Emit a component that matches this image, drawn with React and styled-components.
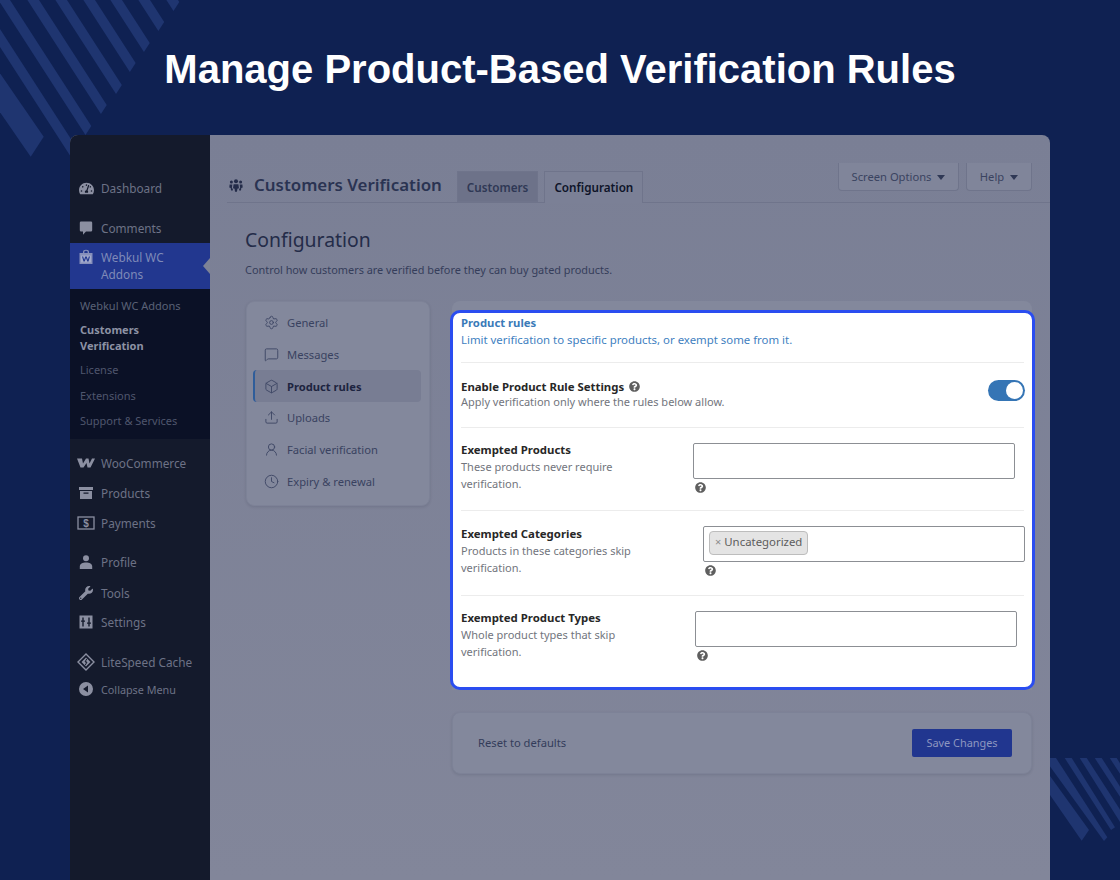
import React from "react";
import styled, { createGlobalStyle } from "styled-components";
import { Settings, MessageSquare, Box, Upload, UserRound, Clock } from "lucide-react";
import { FaTachometerAlt, FaWrench, FaQuestionCircle } from "react-icons/fa";

const uiFont = `"Noto Sans", "Open Sans", sans-serif`;

const GlobalStyle = createGlobalStyle`
  html, body { margin: 0; padding: 0; background: #0f2152; }
  * { box-sizing: border-box; }
`;

const Page = styled.div`
  position: relative;
  width: 1120px;
  height: 880px;
  overflow: hidden;
  background: #0f2152;
  font-family: ${uiFont};
`;

const Decor = styled.svg`
  position: absolute;
  left: 0;
  top: 0;
`;

const PageTitle = styled.h1`
  position: relative;
  margin: 0;
  height: 135px;
  padding-top: 44px;
  text-align: center;
  font: bold 40px/50px "Liberation Sans", Arial, sans-serif;
  color: #fff;
`;

const Window = styled.div`
  position: relative;
  width: 980px;
  height: 745px;
  margin-left: 70px;
  display: grid;
  grid-template-columns: 140px 1fr;
  border-radius: 8px 8px 0 0;
  overflow: hidden;
  background: linear-gradient(180deg, #7a7f95 0%, #82869a 100%);
`;

/* ---- sidebar ---- */
const Sidebar = styled.nav`
  background: #141a2c;
  padding-top: 41px;
  font-size: 11.8px;
  color: #6d7286;
`;

const MenuItem = styled.div`
  display: flex;
  align-items: center;
  height: ${(p) => p.$h || 24}px;
  margin-top: ${(p) => p.$mt || 0}px;
  padding-left: 4px;
  line-height: 17px;
  font-size: ${(p) => p.$size || 11.8}px;
`;

const MenuIcon = styled.span`
  width: 24px;
  margin-right: 3px;
  display: flex;
  justify-content: center;
  flex: none;
  color: #8b8fa1;
`;

const ActiveItem = styled.div`
  position: relative;
  display: flex;
  align-items: flex-start;
  height: 46px;
  margin-top: 3px;
  padding: 6px 0 0 4px;
  line-height: 17px;
  background: #22378f;
  color: #7f8ab8;
  ${MenuIcon} {
    color: #8790bb;
  }
  &::after {
    content: "";
    position: absolute;
    right: 0;
    top: 15px;
    border: 8px solid transparent;
    border-right: 7px solid #7d8296;
    border-left-width: 0;
  }
`;

const SubMenu = styled.div`
  height: 150px;
  padding: 7.5px 0 0 10px;
  background: #0b1126;
  font-size: 11px;
  color: #4f566d;
`;

const SubItem = styled.div`
  margin-bottom: ${(p) => p.$mb || 0}px;
  line-height: ${(p) => (p.$bold ? 16 : 17)}px;
  font-weight: ${(p) => (p.$bold ? 700 : 400)};
  color: ${(p) => (p.$bold ? "#8d92a4" : p.$light ? "#5a6176" : "#4f566d")};
`;

/* ---- main column ---- */
const Main = styled.main`
  min-width: 0;
  padding: 28px 18px 0 17px;
  color: #2b3350;
`;

const Topbar = styled.div`
  display: flex;
  align-items: flex-end;
  height: 40px;
  margin-right: -18px;
  border-bottom: 1px solid #6f748b;
`;

const AppIcon = styled.span`
  display: flex;
  margin: 0 11px 10px 2px;
  color: #242c4a;
`;

const AppTitle = styled.div`
  margin: 0 15px 5px 0;
  font-size: 16.9px;
  line-height: 24px;
  font-weight: 600;
  color: #2a3352;
`;

const Tab = styled.div`
  height: ${(p) => (p.$active ? 32 : 31)}px;
  margin-right: 6px;
  margin-bottom: ${(p) => (p.$active ? -1 : 0)}px;
  padding: 0 9px;
  border: 1px solid #6f748b;
  border-bottom: ${(p) => (p.$active ? "none" : "1px solid #6f748b")};
  background: ${(p) => (p.$active ? "#7b8096" : "#6d7289")};
  font-size: 11.7px;
  line-height: 30px;
  font-weight: 600;
  color: ${(p) => (p.$active ? "#0e1429" : "#2f3855")};
`;

const ScreenButtons = styled.div`
  display: flex;
  gap: 7px;
  margin: 0 18px 12px auto;
  align-self: flex-start;
`;

const ScreenButton = styled.div`
  display: flex;
  align-items: center;
  gap: 6px;
  width: ${(p) => p.$w}px;
  height: 28px;
  justify-content: center;
  border: 1px solid #6f748b;
  border-top: none;
  border-radius: 0 0 4px 4px;
  background: #80859a;
  font-size: 11.2px;
  color: #3a4360;
  &::after {
    content: "";
    border-top: 5px solid #2f3855;
    border-left: 4px solid transparent;
    border-right: 4px solid transparent;
    margin-top: 2px;
  }
`;

const Content = styled.div`
  padding: 24px 0 0 18px;
`;

const Heading = styled.h2`
  margin: 0;
  font-size: 19.4px;
  line-height: 26px;
  font-weight: 400;
  color: #242c49;
`;

const Lead = styled.p`
  margin: 8px 0 0;
  font-size: 10.9px;
  line-height: 17px;
  color: #353d5a;
`;

const Columns = styled.div`
  display: flex;
  align-items: flex-start;
  gap: 22px;
  margin-top: 23px;
`;

const SideNav = styled.div`
  flex: none;
  width: 184px;
  height: 205px;
  margin-left: 1px;
  padding: 5px 8px 0 6px;
  border: 1px solid #7d8297;
  border-radius: 8px;
  background: #83889c;
  box-shadow: 0 1px 3px rgba(20, 26, 44, 0.12);
`;

const SideItem = styled.div`
  display: flex;
  align-items: center;
  gap: 8px;
  height: ${(p) => (p.$active ? 32 : 31.6)}px;
  padding-left: ${(p) => (p.$active ? 9 : 11)}px;
  border-left: ${(p) => (p.$active ? "2px solid #2f5d9a" : "none")};
  border-radius: 4px;
  background: ${(p) => (p.$active ? "#787d93" : "transparent")};
  font-size: 11.2px;
  font-weight: ${(p) => (p.$active ? 700 : 400)};
  color: ${(p) => (p.$active ? "#1d2440" : "#394260")};
  svg {
    flex: none;
    color: #3f4865;
  }
`;

const RightColumn = styled.div`
  flex: 1;
  min-width: 0;
`;

const Panel = styled.div`
  height: 389px;
  padding-top: 9px;
  border-radius: 8px 8px 0 0;
  background: #83889c;
`;

const Highlight = styled.section`
  position: relative;
  height: 380px;
  margin: 0 -3px 0 -2px;
  padding: 0 8px;
  border: 3px solid #2a4df0;
  border-radius: 10px;
  background: #fff;
`;

const Intro = styled.div`
  height: 50px;
  padding-top: 1px;
  border-bottom: 1px solid #ececec;
`;

const IntroTitle = styled.div`
  font-size: 11.3px;
  line-height: 17px;
  font-weight: 700;
  color: #3a7ab8;
`;

const IntroText = styled.div`
  font-size: 11.4px;
  line-height: 17px;
  color: #3f7fbf;
`;

const Row = styled.div`
  display: flex;
  align-items: flex-start;
  height: ${(p) => p.$h}px;
  padding-top: 15px;
  border-bottom: ${(p) => (p.$last ? "none" : "1px solid #ececec")};
`;

const LabelCol = styled.div`
  flex: none;
  width: ${(p) => p.$w || 232}px;
  margin-top: ${(p) => p.$shift || 0}px;
`;

const FieldTitle = styled.div`
  display: flex;
  align-items: center;
  gap: 5px;
  font-size: 11.4px;
  line-height: 17px;
  font-weight: 700;
  color: #272727;
`;

const FieldText = styled.div`
  font-size: 11px;
  line-height: 17px;
  color: #72757d;
  max-width: 180px;
`;

const WideText = styled(FieldText)`
  margin-top: -2px;
  max-width: none;
`;

const Toggle = styled.div`
  position: relative;
  flex: none;
  width: 37px;
  height: 21px;
  margin: 2px -1px 0 auto;
  border-radius: 11px;
  background: #3575b5;
  &::after {
    content: "";
    position: absolute;
    right: 2px;
    top: 2px;
    width: 17px;
    height: 17px;
    border-radius: 50%;
    background: #fff;
  }
`;

const FieldCol = styled.div`
  flex: none;
  width: 322px;
`;

const TextBox = styled.div`
  display: flex;
  align-items: flex-start;
  height: 36px;
  padding: 4px 5px;
  border: 1px solid #8c8f94;
  border-radius: 2px;
  background: #fff;
`;

const Chip = styled.div`
  display: flex;
  align-items: center;
  gap: 3px;
  height: 24px;
  padding: 0 5px 3px;
  border: 1px solid #bdbdbd;
  border-radius: 4px;
  background: #e4e4e4;
  font-size: 11.4px;
  color: #5c5c5c;
  span {
    color: #8c8c8c;
    font-size: 11px;
  }
`;

const HelpTip = styled.span`
  display: flex;
  margin: 3px 0 0 2px;
  color: #5f5f5f;
`;

const SaveCard = styled.div`
  display: flex;
  align-items: center;
  justify-content: space-between;
  height: 62px;
  margin-top: 22px;
  padding: 0 19px 0 25px;
  border: 1px solid #7d8297;
  border-radius: 8px;
  background: #83889c;
  box-shadow: 0 1px 3px rgba(20, 26, 44, 0.12);
`;

const ResetLink = styled.div`
  margin-top: -2px;
  font-size: 11.2px;
  color: #333c5a;
`;

const SaveButton = styled.div`
  width: 100px;
  height: 28px;
  border-radius: 2px;
  background: #21368f;
  font-size: 10.9px;
  line-height: 27px;
  text-align: center;
  color: #8d97c0;
`;

/* ---- background stripes, worked out from the tips ---- */
const stripe = (x, tipY, width = 11.6, slope = 1.55) => {
  // x = right edge at y=0
  const tipX = x + tipY / slope;
  const back = 20;
  return `${x - back / slope},${-back} ${tipX},${tipY} ${tipX - width / 2},${tipY + width * 0.78} ${x - width - back / slope},${-back}`;
};

const topStripes = [
  stripe(-18.7, 260),
  stripe(10, 126),
  stripe(39, 105),
  stripe(67, 85),
  stripe(95, 63),
  stripe(122, 43),
  stripe(150, 22),
  stripe(178, 2),
];

const Stripes = () => (
  <Decor width="1120" height="880" viewBox="0 0 1120 880">
    <g fill="#1f3570">
      {topStripes.map((p, i) => <polygon key={i} points={p} />)}
      <polygon points="-5,66 43.7,136.7 30.7,156.7 -5,105" />
    </g>
    <g fill="#1f3570">
      <polygon points="1050,776 1089,830 1081.7,840.7 1050,795" />
      <polygon points="1049,758 1056,758 1107.3,837.3 1104,841 1049,765" />
      <polygon points="1064.7,758 1071.7,758 1115,827.3 1111,830" />
      <polygon points="1079.7,758 1086.7,758 1130,825 1125,830" />
      <polygon points="1094.7,758 1101.7,758 1130,802 1130,812" />
      <polygon points="1109.7,758 1116.7,758 1130,779 1130,789" />
    </g>
  </Decor>
);

/* ---- admin menu icons ---- */
const Glyph = ({ children, w = 16 }) => (
  <svg width={w} height="16" viewBox="0 0 16 16" fill="currentColor">{children}</svg>
);

const GroupIcon = () => (
  <svg width="14" height="13" viewBox="0 0 14 13" fill="currentColor">
    <circle cx="7" cy="2.2" r="2" />
    <circle cx="2.4" cy="3" r="1.5" />
    <circle cx="11.6" cy="3" r="1.5" />
    <path d="M4.6 5.2h4.8l.6 4-1.6.6-.4 3H6l-.4-3L4 9.2z" />
    <path d="M.6 5.4h2.7l-.4 3.6 1 .9-.1 1.6H2L1.7 9 .3 8.5zM13.4 5.4h-2.7l.4 3.6-1 .9.1 1.6H12l.3-2.5 1.4-.5z" />
  </svg>
);

const CommentIcon = () => (
  <Glyph><path d="M3 1.5h10a1.2 1.2 0 0 1 1.2 1.2v7.6A1.2 1.2 0 0 1 13 11.5H8l-3 3.2v-3.2H3a1.2 1.2 0 0 1-1.2-1.2V2.7A1.2 1.2 0 0 1 3 1.5z" /></Glyph>
);

const BagIcon = () => (
  <Glyph>
    <path d="M1.5 4h13v11h-13z" />
    <path d="M5 4.2V3a3 2.2 0 0 1 6 0v1.2h-1.3V3a1.7 1.2 0 0 0-3.4 0v1.2z" />
    <path d="M3 6.5h10v7H3z" fill="#a3abcd" />
    <path d="M4 7.5l1.5 5h1.2L8 9l1.3 3.5h1.2l1.5-5h-1.2l-.9 3.2L8.7 7.5H7.3l-1.2 3.2-.9-3.2z" fill="#22378f" />
  </Glyph>
);

const WooIcon = () => (
  <svg width="18" height="10" viewBox="0 0 18 10" fill="currentColor">
    <path d="M0 .5h5l1 5 3-5h2.5l1 5 2.5-5h3l-4.5 9h-3l-1-4.5-3 4.5h-3z" />
  </svg>
);

const ArchiveIcon = () => (
  <Glyph>
    <path d="M1 2h14v3H1z" />
    <path fillRule="evenodd" d="M2 6h12v8H2zM5.5 7.5v1.2h5V7.5z" />
  </Glyph>
);

const PaymentIcon = () => (
  <svg width="18" height="14" viewBox="0 0 18 14" fill="none" stroke="currentColor" strokeWidth="1.3">
    <rect x="1" y="1" width="16" height="12" />
    <text x="9" y="10.8" textAnchor="middle" fontSize="10" fontWeight="700" fontFamily="Liberation Sans, sans-serif" fill="currentColor" stroke="none">$</text>
  </svg>
);

const ProfileIcon = () => (
  <Glyph>
    <circle cx="8" cy="4.2" r="3" />
    <path d="M1.8 15v-2.6C1.8 9.8 4.5 8.4 8 8.4s6.2 1.4 6.2 4V15z" />
  </Glyph>
);

const SlidersIcon = () => (
  <Glyph>
    <path fillRule="evenodd" d="M1.5 1.5h13v13h-13zM4.3 3.5v3H3v1.3h1.3v4.7h1.4V7.8H7V6.5H5.7v-3zM10.3 3.5v5H9v1.3h1.3v2.7h1.4V9.8H13V8.5h-1.3v-5z" />
  </Glyph>
);

const DiamondIcon = () => (
  <svg width="18" height="18" viewBox="0 0 18 18" fill="none" stroke="currentColor">
    <path d="M9 1l8 8-8 8-8-8z" strokeWidth="1.4" />
    <path d="M9 4.5L13.5 9 9 13.5 4.5 9z" fill="currentColor" stroke="none" />
    <path d="M9.8 5.8L8 9h2l-1.8 3.2" stroke="#141a2c" strokeWidth="1" />
  </svg>
);

const CollapseIcon = () => (
  <Glyph>
    <path fillRule="evenodd" d="M8 1a7 7 0 1 1 0 14A7 7 0 0 1 8 1zm2 3.5L5 8l5 3.5z" />
  </Glyph>
);

const navItems = [
  { icon: Settings, label: "General" },
  { icon: MessageSquare, label: "Messages" },
  { icon: Box, label: "Product rules", active: true },
  { icon: Upload, label: "Uploads" },
  { icon: UserRound, label: "Facial verification" },
  { icon: Clock, label: "Expiry & renewal" },
];

const Help = () => (
  <HelpTip><FaQuestionCircle size={11} /></HelpTip>
);

const Field = ({ title, text, labelWidth, labelShift, height, last, children }) => (
  <Row $h={height} $last={last}>
    <LabelCol $w={labelWidth} $shift={labelShift}>
      <FieldTitle>{title}</FieldTitle>
      <FieldText>{text}</FieldText>
    </LabelCol>
    <FieldCol>
      <TextBox>{children}</TextBox>
      <Help />
    </FieldCol>
  </Row>
);

export default function App() {
  return (
    <Page>
      <GlobalStyle />
      <Stripes />
      <PageTitle>Manage Product-Based Verification Rules</PageTitle>
      <Window>
        <Sidebar>
          <MenuItem>
            <MenuIcon><FaTachometerAlt size={15} /></MenuIcon>Dashboard
          </MenuItem>
          <MenuItem $mt={16}>
            <MenuIcon><CommentIcon /></MenuIcon>Comments
          </MenuItem>
          <ActiveItem>
            <MenuIcon><BagIcon /></MenuIcon>
            <span>Webkul WC<br />Addons</span>
          </ActiveItem>
          <SubMenu>
            <SubItem $light $mb={8.5}>Webkul WC Addons</SubItem>
            <SubItem $bold $mb={6.5}>Customers<br />Verification</SubItem>
            <SubItem $mb={9}>License</SubItem>
            <SubItem $mb={8}>Extensions</SubItem>
            <SubItem>Support &amp; Services</SubItem>
          </SubMenu>
          <MenuItem $mt={12}>
            <MenuIcon><WooIcon /></MenuIcon>WooCommerce
          </MenuItem>
          <MenuItem $mt={6}>
            <MenuIcon><ArchiveIcon /></MenuIcon>Products
          </MenuItem>
          <MenuItem $mt={6}>
            <MenuIcon><PaymentIcon /></MenuIcon>Payments
          </MenuItem>
          <MenuItem $mt={15}>
            <MenuIcon><ProfileIcon /></MenuIcon>Profile
          </MenuItem>
          <MenuItem $mt={7}>
            <MenuIcon><FaWrench size={14} /></MenuIcon>Tools
          </MenuItem>
          <MenuItem $mt={5}>
            <MenuIcon><SlidersIcon /></MenuIcon>Settings
          </MenuItem>
          <MenuItem $mt={16}>
            <MenuIcon><DiamondIcon /></MenuIcon>LiteSpeed Cache
          </MenuItem>
          <MenuItem $mt={3} $size={10.8}>
            <MenuIcon><CollapseIcon /></MenuIcon>Collapse Menu
          </MenuItem>
        </Sidebar>
        <Main>
          <Topbar>
            <AppIcon><GroupIcon /></AppIcon>
            <AppTitle>Customers Verification</AppTitle>
            <Tab>Customers</Tab>
            <Tab $active>Configuration</Tab>
            <ScreenButtons>
              <ScreenButton $w={121}>Screen Options</ScreenButton>
              <ScreenButton $w={66}>Help</ScreenButton>
            </ScreenButtons>
          </Topbar>
          <Content>
            <Heading>Configuration</Heading>
            <Lead>Control how customers are verified before they can buy gated products.</Lead>
            <Columns>
              <SideNav>
                {navItems.map(({ icon: Icon, label, active }) => (
                  <SideItem key={label} $active={active}>
                    <Icon size={15} strokeWidth={1.5} />
                    {label}
                  </SideItem>
                ))}
              </SideNav>
              <RightColumn>
                <Panel>
                  <Highlight>
                    <Intro>
                      <IntroTitle>Product rules</IntroTitle>
                      <IntroText>Limit verification to specific products, or exempt some from it.</IntroText>
                    </Intro>
                    <Row $h={65}>
                      <div>
                        <FieldTitle>
                          Enable Product Rule Settings
                          <FaQuestionCircle size={11} color="#5f5f5f" />
                        </FieldTitle>
                        <WideText>Apply verification only where the rules below allow.</WideText>
                      </div>
                      <Toggle />
                    </Row>
                    <Field title="Exempted Products" text="These products never require verification." labelWidth={232} labelShift={-2} height={83} />
                    <Field title="Exempted Categories" text="Products in these categories skip verification." labelWidth={242} labelShift={-1} height={85}>
                      <Chip><span>×</span>Uncategorized</Chip>
                    </Field>
                    <Field title="Exempted Product Types" text="Whole product types that skip verification." labelWidth={234} labelShift={-2} height={90} last />
                  </Highlight>
                </Panel>
                <SaveCard>
                  <ResetLink>Reset to defaults</ResetLink>
                  <SaveButton>Save Changes</SaveButton>
                </SaveCard>
              </RightColumn>
            </Columns>
          </Content>
        </Main>
      </Window>
    </Page>
  );
}
